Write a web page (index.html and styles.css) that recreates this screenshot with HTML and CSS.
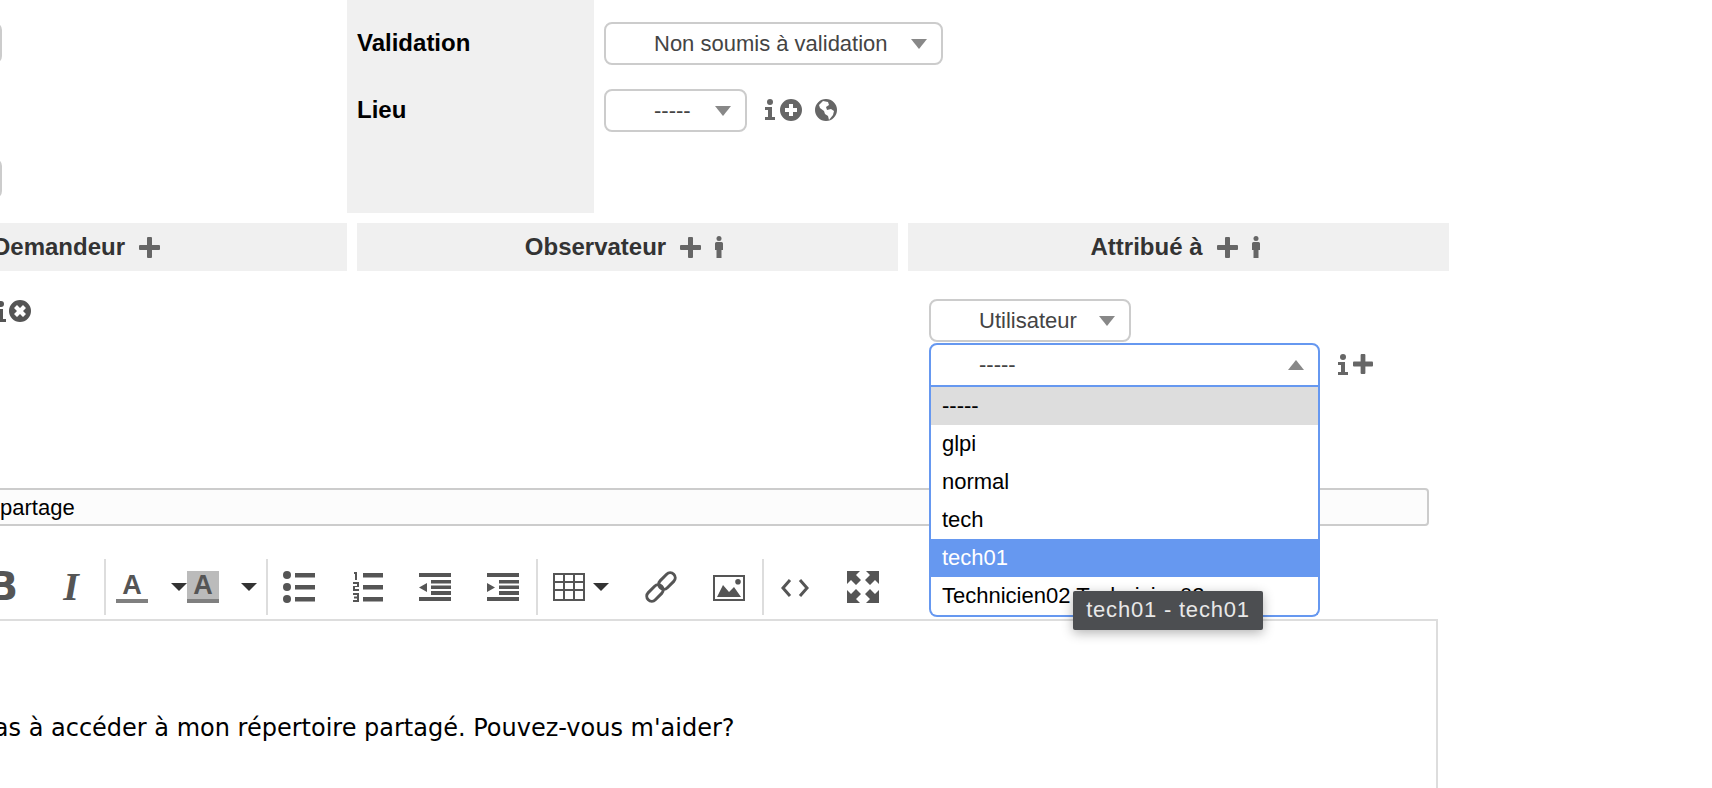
FILE: index.html
```html
<!DOCTYPE html>
<html lang="fr">
<head>
    <meta charset="UTF-8">
    <title>ticket</title>
    <link rel="stylesheet" href="styles.css">
</head>
<body>

<svg class="defs">
    <symbol id="i-plus" viewBox="0 0 21 21"><rect x="0" y="8" width="21" height="5" rx="1"/><rect x="8" y="0" width="5" height="21" rx="1"/></symbol>
    <symbol id="i-info" viewBox="0 0 10 21"><circle cx="5" cy="3" r="3"/><path d="M0 8h7v10h3v3H0v-3h3v-7H0z"/></symbol>
    <symbol id="i-male" viewBox="0 0 8 22"><circle cx="4" cy="2.5" r="2.5"/><path d="M1.5 6h5A1.5 1.5 0 0 1 8 7.5V14H6.500V22H1.500V14H0V7.500A1.500 1.500 0 0 1 1.500 6z"/></symbol>
    <symbol id="i-plus-circle" viewBox="0 0 22 22"><path fill-rule="evenodd" d="M11 0a11 11 0 1 0 0 22a11 11 0 1 0 0-22zM9 5h4v4h4v4h-4v4H9v-4H5V9h4z"/></symbol>
    <symbol id="i-times-circle" viewBox="0 0 22 22"><path fill-rule="evenodd" d="M11 0a11 11 0 1 0 0 22a11 11 0 1 0 0-22zM8 5l3 3 3-3 3 3-3 3 3 3-3 3-3-3-3 3-3-3 3-3-3-3z"/></symbol>
    <symbol id="i-globe" viewBox="0 0 22 22"><path fill-rule="evenodd" d="M11 0a11 11 0 1 0 0 22a11 11 0 1 0 0-22zM8 2l5 1 1 3-3 2 1 3 4-1 3 2-1 4-4 5-1-4-3-2-1-3-4-3-1-3z"/></symbol>
    <symbol id="e-bullist" viewBox="0 0 32 32"><circle cx="4" cy="4" r="4"/><circle cx="4" cy="16" r="4"/><circle cx="4" cy="28" r="4"/><path d="M12 2h20v4.500H12zM12 14h20v4.500H12zM12 26h20v4.500H12z"/></symbol>
    <symbol id="e-numlist" viewBox="0 0 32 32"><path d="M12 2h20v4.500H12zM12 14h20v4.500H12zM12 26h20v4.500H12z"/><path d="M3 1h3v8H4V3H3zM2 11h6v5H4v2h4v2H2v-5h4v-2H2zM2 22h6v9H2v-2h4v-1.500H3v-2h3V24H2z"/></symbol>
    <symbol id="e-outdent" viewBox="0 0 32 32"><path d="M0 2h32v4H0zM0 26h32v4H0zM12 9h20v3.500H12zM12 14.500h20v3.500H12zM12 20h20v4H12zM0 16.500L8 12v9z"/></symbol>
    <symbol id="e-indent" viewBox="0 0 32 32"><path d="M0 2h32v4H0zM0 26h32v4H0zM12 9h20v3.500H12zM12 14.500h20v3.500H12zM12 20h20v4H12zM0 12l8 4.500L0 21z"/></symbol>
    <symbol id="e-table" viewBox="0 0 32 32"><path fill-rule="evenodd" d="M0 2h32v28H0zM2 4v6h8V4zM12 4v6h8V4zM22 4v6h8V4zM2 12v6h8v-6zM12 12v6h8v-6zM22 12v6h8v-6zM2 20v8h8v-8zM12 20v8h8v-8zM22 20v8h8v-8z"/></symbol>
    <symbol id="e-link" viewBox="0 0 32 32"><g transform="rotate(-45 16 16)" fill="none" stroke="#555" stroke-width="3"><rect x="-2" y="11" width="19" height="10" rx="5"/><rect x="15" y="11" width="19" height="10" rx="5"/></g></symbol>
    <symbol id="e-image" viewBox="0 0 32 32"><path fill-rule="evenodd" d="M0 4h32v26H0zM2 6v22h28V6z"/><path d="M4 26l6-12 6 7 5-5 7 10zM25 8a2.800 2.800 0 1 0 0 5.600a2.800 2.800 0 1 0 0-5.600z"/></symbol>
    <symbol id="e-code" viewBox="0 0 32 32"><path d="M11 9l-7 8 7 8M21 9l7 8-7 8" fill="none" stroke="#555" stroke-width="3"/></symbol>
    <symbol id="e-full" viewBox="0 0 32 32"><path d="M0 0h13L9 4l5 5-5 5-5-5-4 4zM32 0v13l-4-4-5 5-5-5 5-5-4-4zM0 32V19l4 4 5-5 5 5-5 5 4 4zM32 32H19l4-4-5-5 5-5 5 5 4-4z"/></symbol>
</svg>

<div class="page">

    <div class="top">
        <div class="top-left">
            <div class="stub"></div>
            <div class="stub stub-low"></div>
        </div>
        <div class="label-col">
            <div class="label">Validation</div>
            <div class="label">Lieu</div>
        </div>
        <div class="value-col">
            <div class="value-row">
                <div class="sel sel-validation"><span>Non soumis à validation</span><span class="arrow"></span></div>
            </div>
            <div class="value-row">
                <div class="sel sel-lieu"><span>-----</span><span class="arrow"></span></div>
                <svg class="ico ico-info lieu-info"><use href="#i-info"/></svg>
                <svg class="ico ico-round lieu-plus"><use href="#i-plus-circle"/></svg>
                <svg class="ico ico-round lieu-globe"><use href="#i-globe"/></svg>
            </div>
        </div>
    </div>

    <div class="actor-heads">
        <div class="actor-head head-first">Demandeur<svg class="ico ico-plus"><use href="#i-plus"/></svg></div>
        <div class="actor-head">Observateur<svg class="ico ico-plus"><use href="#i-plus"/></svg><svg class="ico ico-male"><use href="#i-male"/></svg></div>
        <div class="actor-head">Attribué à<svg class="ico ico-plus"><use href="#i-plus"/></svg><svg class="ico ico-male"><use href="#i-male"/></svg></div>
    </div>

    <div class="actor-body">
        <div class="actor-col col-first">
            <svg class="ico ico-info dark"><use href="#i-info"/></svg>
            <svg class="ico ico-round dark"><use href="#i-times-circle"/></svg>
        </div>
        <div class="actor-col"></div>
        <div class="actor-col col-assign">
            <div class="sel sel-type"><span>Utilisateur</span><span class="arrow"></span></div>
            <div class="assign-row">
                <div class="sel sel-open"><span>-----</span><span class="arrow arrow-up"></span></div>
                <svg class="ico ico-info assign-info"><use href="#i-info"/></svg>
                <svg class="ico assign-plus"><use href="#i-plus"/></svg>
                <ul class="options">
                    <li class="current">-----</li>
                    <li>glpi</li>
                    <li>normal</li>
                    <li>tech</li>
                    <li class="hover">tech01</li>
                    <li>Technicien02 Technicien02</li>
                </ul>
                <div class="tooltip">tech01 - tech01</div>
            </div>
        </div>
    </div>

    <div class="title-input">partage</div>

    <div class="toolbar">
        <span class="tool letter letter-b">B</span>
        <span class="tool letter letter-i">I</span>
        <span class="sep sep-a"></span>
        <span class="tool color-a">A</span>
        <span class="caret caret-a"></span>
        <span class="tool color-a color-bg">A</span>
        <span class="caret caret-b"></span>
        <span class="sep sep-b"></span>
        <svg class="tool"><use href="#e-bullist"/></svg>
        <svg class="tool"><use href="#e-numlist"/></svg>
        <svg class="tool"><use href="#e-outdent"/></svg>
        <svg class="tool"><use href="#e-indent"/></svg>
        <span class="sep"></span>
        <svg class="tool"><use href="#e-table"/></svg>
        <span class="caret caret-c"></span>
        <svg class="tool"><use href="#e-link"/></svg>
        <svg class="tool"><use href="#e-image"/></svg>
        <span class="sep"></span>
        <svg class="tool"><use href="#e-code"/></svg>
        <svg class="tool"><use href="#e-full"/></svg>
    </div>

    <div class="editor">
        <p>Je n'arrive pas à accéder à mon répertoire partagé. Pouvez-vous m'aider?</p>
    </div>

</div>

</body>
</html>
```

FILE: styles.css
```css
html, body {
    margin: 0;
    height: 788px;
    overflow: hidden;
    background-color: #fff;
}
body {
    font-family: "Liberation Sans", Arial, sans-serif;
    font-size: 22px;
    color: #000;
}
.defs {
    display: none;
}
.page {
    margin-left: -194px;
    width: 1700px;
}
.ico {
    display: block;
    fill: #666;
    flex: none;
}
.ico-plus {
    width: 21px;
    height: 21px;
    margin-left: 14px;
}
.ico-male {
    width: 8px;
    height: 22px;
    margin-left: 14px;
}
.ico-info {
    width: 10px;
    height: 21px;
}
.ico-round {
    width: 22px;
    height: 22px;
}
.dark {
    fill: #555;
}

/* top of the form */
.top {
    display: flex;
    height: 213px;
}
.top-left {
    width: 541px;
    padding-top: 22px;
    box-sizing: border-box;
}
.stub {
    width: 196px;
    height: 42px;
    box-sizing: border-box;
    border: 2px solid #ccc;
    border-radius: 8px;
}
.stub-low {
    margin-top: 94px;
    height: 41px;
}
.label-col {
    width: 247px;
    box-sizing: border-box;
    padding: 22px 0 0 10px;
    background-color: #f0f0f0;
}
.label {
    height: 42px;
    line-height: 42px;
    margin-bottom: 25px;
    font-size: 24px;
    font-weight: bold;
}
.value-col {
    padding: 22px 0 0 10px;
}
.value-row {
    display: flex;
    align-items: center;
    height: 43px;
    margin-bottom: 24px;
}
.sel {
    display: flex;
    align-items: center;
    justify-content: space-between;
    height: 43px;
    box-sizing: border-box;
    padding: 0 14px 0 48px;
    border: 2px solid #ccc;
    border-radius: 8px;
    background-color: #fff;
    color: #444;
    flex: none;
}
.arrow {
    width: 0;
    height: 0;
    border-left: 8px solid transparent;
    border-right: 8px solid transparent;
    border-top: 10px solid #888;
}
.arrow-up {
    border-top: 0;
    border-bottom: 10px solid #888;
}
.sel-validation {
    width: 339px;
}
.sel-lieu {
    width: 143px;
}
.lieu-info {
    margin-left: 18px;
    margin-top: -2px;
}
.lieu-plus {
    margin-left: 5px;
    margin-top: -1px;
}
.lieu-globe {
    margin-left: 13px;
    margin-top: -1px;
}

/* actors */
.actor-heads, .actor-body {
    display: grid;
    grid-template-columns: 541px 541px 541px;
    column-gap: 10px;
}
.actor-heads {
    margin-top: 10px;
}
.actor-head {
    display: flex;
    align-items: center;
    justify-content: center;
    height: 48px;
    padding-right: 7px;
    box-sizing: border-box;
    background-color: #f0f0f0;
    color: #333;
    font-size: 24px;
    font-weight: bold;
}
.head-first {
    padding-right: 0;
}
.actor-body {
    height: 217px;
}
.col-first {
    display: flex;
    align-items: center;
    align-self: start;
    margin-top: 29px;
    padding-left: 190px;
    gap: 3px;
}
.col-assign {
    padding-top: 28px;
    padding-left: 21px;
}
.sel-type {
    width: 202px;
}
.assign-row {
    position: relative;
    display: flex;
    align-items: center;
    margin-top: 1px;
}
.sel-open {
    width: 391px;
    height: 44px;
    border-color: #6698f0;
    border-radius: 8px 8px 0 0;
}
.assign-info {
    margin-left: 18px;
    margin-top: -2px;
}
.assign-plus {
    width: 20px;
    height: 20px;
    margin-left: 5px;
    margin-top: -2px;
}
.options {
    position: absolute;
    top: 44px;
    left: 0;
    z-index: 2;
    width: 391px;
    box-sizing: border-box;
    margin: 0;
    padding: 0;
    list-style: none;
    background-color: #fff;
    border: 2px solid #6698f0;
    border-top: 0;
    border-radius: 0 0 8px 8px;
}
.options li {
    height: 38px;
    line-height: 38px;
    padding-left: 11px;
    white-space: nowrap;
}
.options .current {
    background-color: #ddd;
}
.options .hover {
    background-color: #6698f0;
    color: #fff;
}
.tooltip {
    position: absolute;
    top: 248px;
    left: 144px;
    z-index: 3;
    width: 190px;
    height: 39px;
    line-height: 38px;
    box-sizing: border-box;
    text-align: center;
    background-color: #4c4e51;
    color: #e8e8e8;
    letter-spacing: 0.8px;
    border-radius: 2px;
    box-shadow: 0 3px 12px rgba(0, 0, 0, 0.3);
}

/* title */
.title-input {
    margin-left: 174px;
    width: 1449px;
    height: 38px;
    line-height: 35px;
    box-sizing: border-box;
    padding-left: 18px;
    border: 2px solid #ccc;
    border-radius: 4px;
    background-color: #fcfcfc;
}

/* editor */
.toolbar {
    display: flex;
    align-items: center;
    height: 56px;
    margin-top: 33px;
    padding-left: 181px;
}
.tool {
    display: block;
    flex: none;
    width: 32px;
    height: 32px;
    margin-right: 36px;
    fill: #555;
    color: #555;
}
.letter {
    line-height: 32px;
    text-align: center;
}
.letter-b {
    font-size: 39px;
    font-weight: bold;
    font-family: "DejaVu Sans", sans-serif;
}
.letter-i {
    margin-right: 17px;
    font-size: 40px;
    font-style: italic;
    font-weight: bold;
    font-family: "Liberation Serif", serif;
}
.sep {
    flex: none;
    width: 2px;
    height: 56px;
    background-color: #ddd;
    margin-right: 15px;
    margin-left: -19px;
}
.letter-i + .sep {
    margin-left: 0;
}
.sep-a {
    margin-right: 10px;
}
.sep-b {
    margin-left: 9px;
}
.color-a {
    box-sizing: border-box;
    margin-right: 23px;
    font-size: 27px;
    font-weight: bold;
    line-height: 29px;
    text-align: center;
    border-bottom: 4px solid #808080;
}
.color-bg {
    margin-right: 22px;
    background-color: #bbb;
}
.caret {
    flex: none;
    width: 0;
    height: 0;
    border-left: 8px solid transparent;
    border-right: 8px solid transparent;
    border-top: 8px solid #333;
}
.caret-b {
    margin-right: 0;
}
.caret-c {
    margin-left: -28px;
    margin-right: 36px;
}
.editor {
    width: 1632px;
    height: 300px;
    box-sizing: border-box;
    margin-top: 4px;
    padding: 93px 0 0 42px;
    border: 2px solid #ddd;
    font-family: "DejaVu Sans", sans-serif;
    font-size: 24px;
    white-space: nowrap;
}
.editor p {
    margin: 0;
}
```
